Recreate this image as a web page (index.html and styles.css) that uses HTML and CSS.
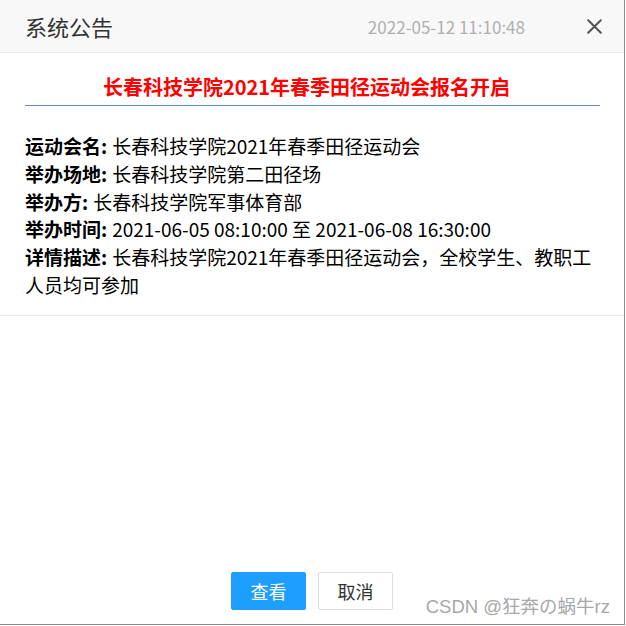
FILE: index.html
```html
<!DOCTYPE html>
<html lang="zh-CN">
<head>
<meta charset="utf-8">
<title>系统公告</title>
<link rel="stylesheet" href="styles.css">
</head>
<body>
<div class="dialog">
  <div class="dialog-header">
    <span class="dialog-title">系统公告</span>
    <span class="dialog-date">2022-05-12 11:10:48</span>
    <span class="dialog-close" aria-label="关闭">
      <svg width="15" height="15" viewBox="0 0 15 15"><path d="M1.2 1.2L13.8 13.8M13.8 1.2L1.2 13.8" stroke="#555" stroke-width="2" stroke-linecap="round" fill="none"/></svg>
    </span>
  </div>
  <div class="dialog-content">
    <h2 class="notice-title">长春科技学院2021年春季田径运动会报名开启</h2>
    <div class="notice-body">
      <p class="row"><b class="label">运动会名:</b>长春科技学院2021年春季田径运动会</p>
      <p class="row"><b class="label">举办场地:</b>长春科技学院第二田径场</p>
      <p class="row"><b class="label">举办方:</b>长春科技学院军事体育部</p>
      <p class="row"><b class="label">举办时间:</b>2021-06-05 08:10:00 至 2021-06-08 16:30:00</p>
      <p class="row"><b class="label">详情描述:</b>长春科技学院2021年春季田径运动会，全校学生、教职工人员均可参加</p>
    </div>
  </div>
  <div class="dialog-spacer"></div>
  <div class="dialog-footer">
    <button class="btn btn-primary">查看</button>
    <button class="btn btn-default">取消</button>
  </div>
  <div class="watermark">CSDN @狂奔の蜗牛rz</div>
</div>
</body>
</html>
```

FILE: styles.css
```css
html, body {
  margin: 0;
  padding: 0;
  background: #fff;
}

body {
  font-family: "Noto Sans CJK SC", "Noto Sans", sans-serif;
  color: #000;
}

.dialog {
  position: relative;
  width: 624px;
  height: 624px;
  border-right: 1px solid #8a8a8a;
  border-bottom: 1px solid #8a8a8a;
  display: flex;
  flex-direction: column;
  background: #fff;
}

.dialog-header {
  height: 52px;
  flex: none;
  background: #f8f8f8;
  border-bottom: 1px solid #e8e8e8;
  display: flex;
  align-items: center;
  padding: 0 22px 0 25px;
}

.dialog-title {
  font-size: 22px;
  color: #333;
  flex: 1;
  line-height: 52px;
}

.dialog-date {
  font-size: 17px;
  color: #b0b0b0;
  margin-right: 62px;
}

.dialog-close {
  display: flex;
  width: 15px;
  height: 15px;
  margin-top: 1px;
}

.dialog-content {
  flex: none;
  padding: 20px 24px 16px 25px;
  border-bottom: 1px solid #e6e6e6;
}

.notice-title {
  margin: 0;
  font-size: 20px;
  line-height: 28px;
  font-weight: bold;
  color: #ff0000;
  text-align: center;
  padding: 0 12px 4px 0;
  border-bottom: 1px solid #628ac4;
}

.notice-body {
  margin-top: 26px;
}

.row {
  margin: 0;
  font-size: 19px;
  line-height: 27.8px;
  color: #000;
}

.label {
  font-weight: bold;
  margin-right: 5px;
}

.dialog-spacer {
  flex: 1;
}

.dialog-footer {
  flex: none;
  display: flex;
  justify-content: center;
  gap: 12px;
  padding: 0 0 14px 0;
}

.btn {
  width: 75px;
  height: 38px;
  border-radius: 2px;
  font-family: "Noto Sans CJK SC", sans-serif;
  font-size: 18px;
  padding: 0;
  cursor: pointer;
}

.btn-primary {
  background: #1e9fff;
  border: 1px solid #1e9fff;
  color: #fff;
}

.btn-default {
  background: #fff;
  border: 1px solid #dedede;
  color: #333;
}

.watermark {
  position: absolute;
  right: 14px;
  bottom: 6px;
  font-family: "Liberation Sans", "Noto Sans CJK SC", sans-serif;
  font-size: 18.5px;
  color: #a8a8a8;
  text-shadow: 0 0 1px #fff;
  white-space: nowrap;
}
```
